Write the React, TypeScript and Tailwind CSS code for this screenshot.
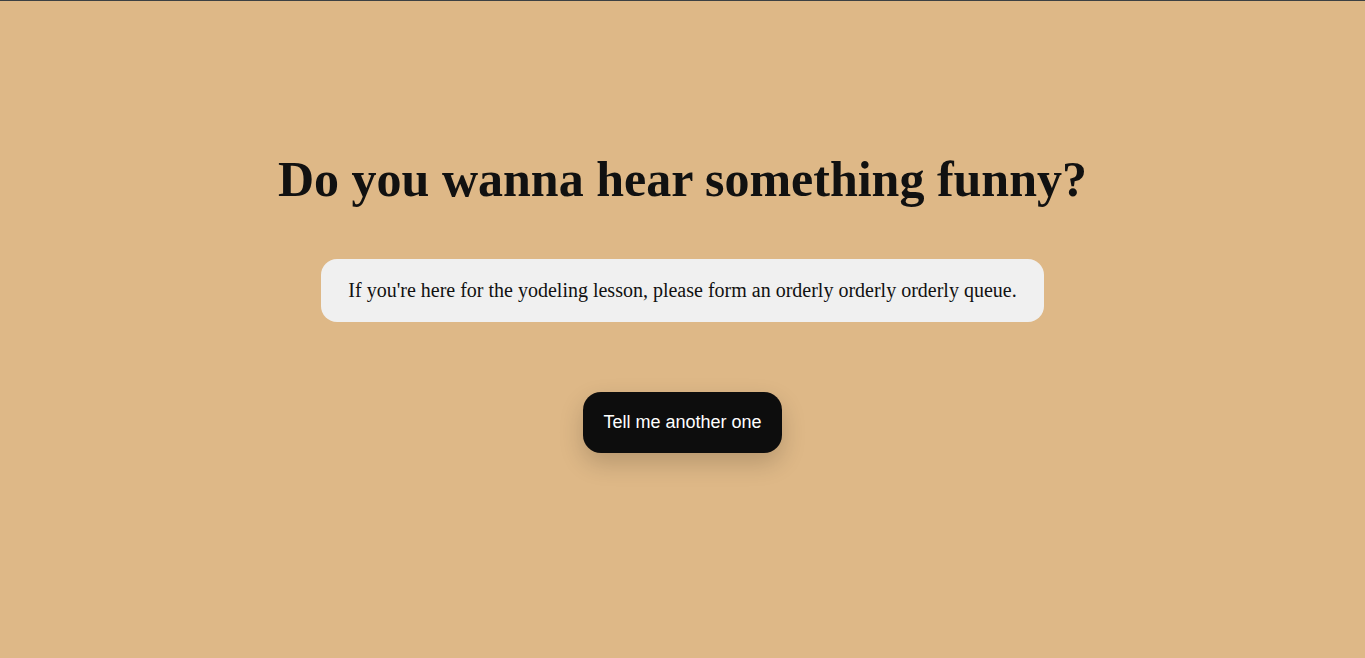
export default function App() {
  return (
    <div className="min-h-[658px] w-full bg-[#deb887] border-t border-[#3c4043] flex flex-col items-center font-['Liberation_Serif','Times_New_Roman',serif]">
      <h1 className="mt-[150px] text-[50px] font-bold text-[#111111] leading-[1.15]">
        Do you wanna hear something funny?
      </h1>
      <div className="mt-[50px] bg-[#f0f0f0] rounded-[16px] px-[27px] py-[20px] text-[20px] text-[#111111] leading-[normal]">
        If you're here for the yodeling lesson, please form an orderly orderly orderly queue.
      </div>
      <button className="mt-[70px] bg-[#0d0d0d] text-white rounded-[18px] p-[20px] text-[18px] leading-[normal] shadow-[0_10px_25px_rgba(0,0,0,0.18)] font-['Liberation_Sans',Arial,sans-serif]">
        Tell me another one
      </button>
    </div>
  );
}
